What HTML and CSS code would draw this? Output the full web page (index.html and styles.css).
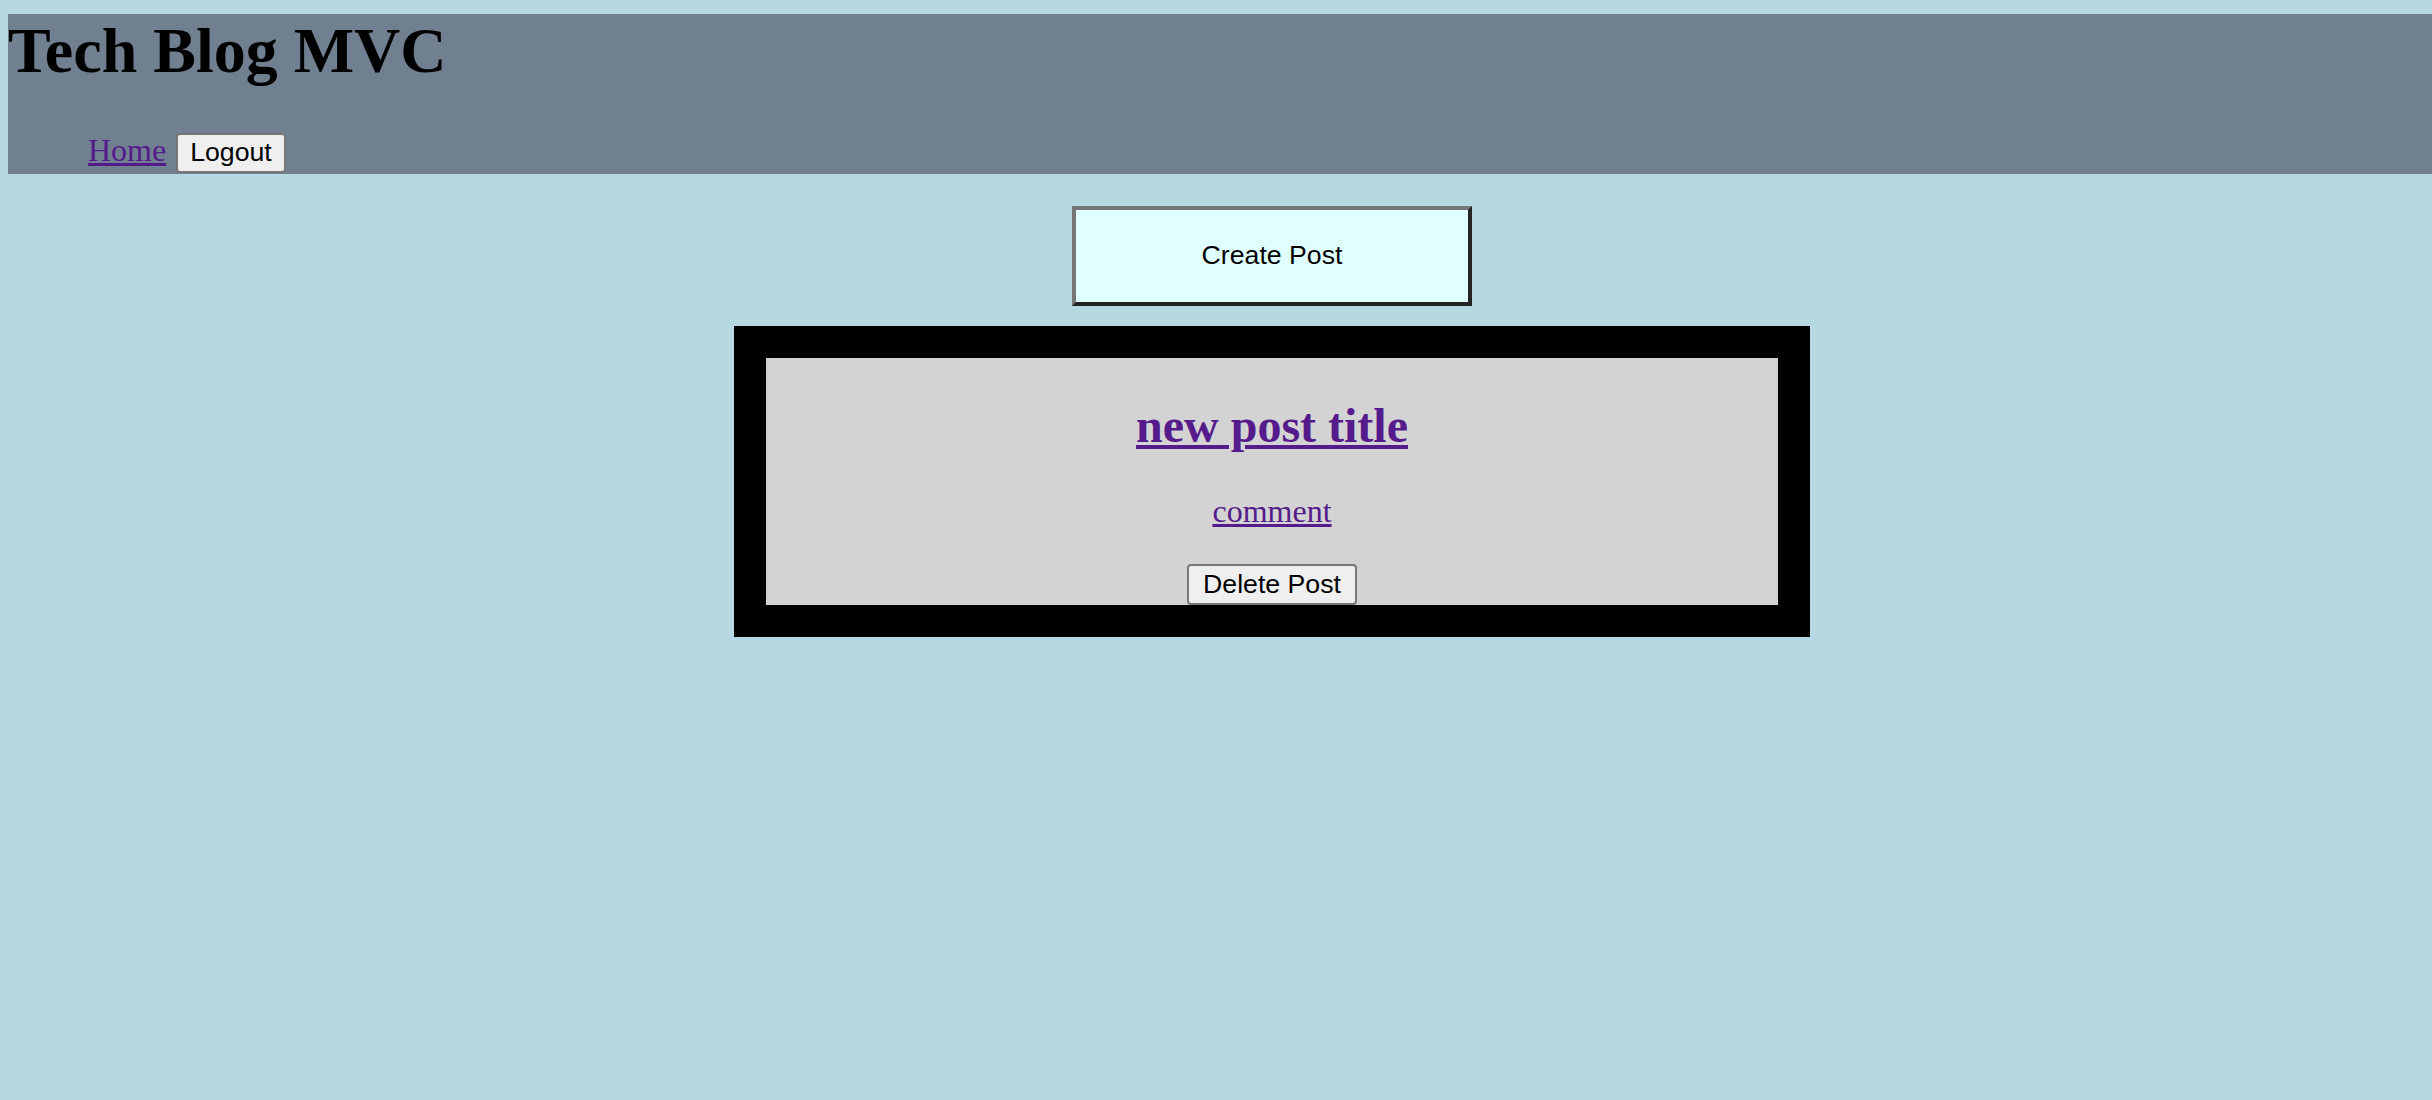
FILE: index.html
```html
<!DOCTYPE html>
<html lang="en">
<head>
<meta charset="utf-8">
<title>Tech Blog MVC</title>
<link rel="stylesheet" href="styles.css">
</head>
<body>
<header class="site-header">
  <h1 class="site-title">Tech Blog MVC</h1>
  <ul class="nav">
    <li><a class="nav-link" href="#">Home</a></li>
    <li><button class="btn btn-logout" type="button">Logout</button></li>
  </ul>
</header>
<main class="dashboard">
  <button class="create-btn" type="button">Create Post</button>
  <section class="post-frame">
    <article class="post-card">
      <h2 class="post-title"><a href="#">new post title</a></h2>
      <p class="post-comment"><a href="#">comment</a></p>
      <button class="btn btn-delete" type="button">Delete Post</button>
    </article>
  </section>
</main>
</body>
</html>
```
FILE: styles.css
```css
html, body {
  margin: 0;
  padding: 0;
}

html {
  background: #b6d8e3;
}

body {
  font-family: "Liberation Serif", "Times New Roman", serif;
  color: #000;
  padding-top: 14px;
}

a {
  color: #551a8b;
  text-decoration: underline;
}

.site-header {
  margin: 0 0 0 8px;
  padding-bottom: 1px;
  background: #708090;
}

.site-title {
  margin: 0 0 44px;
  font-size: 64px;
  font-weight: bold;
  line-height: normal;
}

.nav {
  margin: 0;
  padding: 0 0 0 80px;
  list-style: none;
  display: flex;
  align-items: baseline;
  gap: 10px;
}

.nav-link {
  font-size: 32px;
  line-height: normal;
}

.btn {
  font-family: "Liberation Sans", Arial, sans-serif;
  font-size: 26.67px;
  line-height: normal;
  color: #000;
  background: #efefef;
  border: 2px solid #767676;
  border-radius: 4px;
  padding: 2px 12px;
}

.btn-logout {
  padding: 2.5px 12px;
}

.dashboard {
  padding: 32px 0 0 112px;
  display: flex;
  flex-direction: column;
  align-items: center;
}

.create-btn {
  box-sizing: border-box;
  width: 400px;
  height: 100px;
  margin-bottom: 20px;
  background: #e0ffff;
  border: 4px solid;
  border-color: #767676 #242424 #242424 #767676;
  font-family: "Liberation Sans", Arial, sans-serif;
  font-size: 26.67px;
  color: #000;
}

.post-frame {
  box-sizing: border-box;
  width: 1076px;
  padding: 32px;
  background: #000;
}

.post-card {
  background: #d3d3d3;
  text-align: center;
  padding-top: 40px;
}

.post-title {
  margin: 0;
  font-size: 48px;
  font-weight: bold;
  line-height: normal;
}

.post-comment {
  margin: 40px 0 34px;
  font-size: 32px;
  line-height: normal;
}

.btn-delete {
  display: block;
  margin: 0 auto;
  padding: 3.3px 14px;
}
```
